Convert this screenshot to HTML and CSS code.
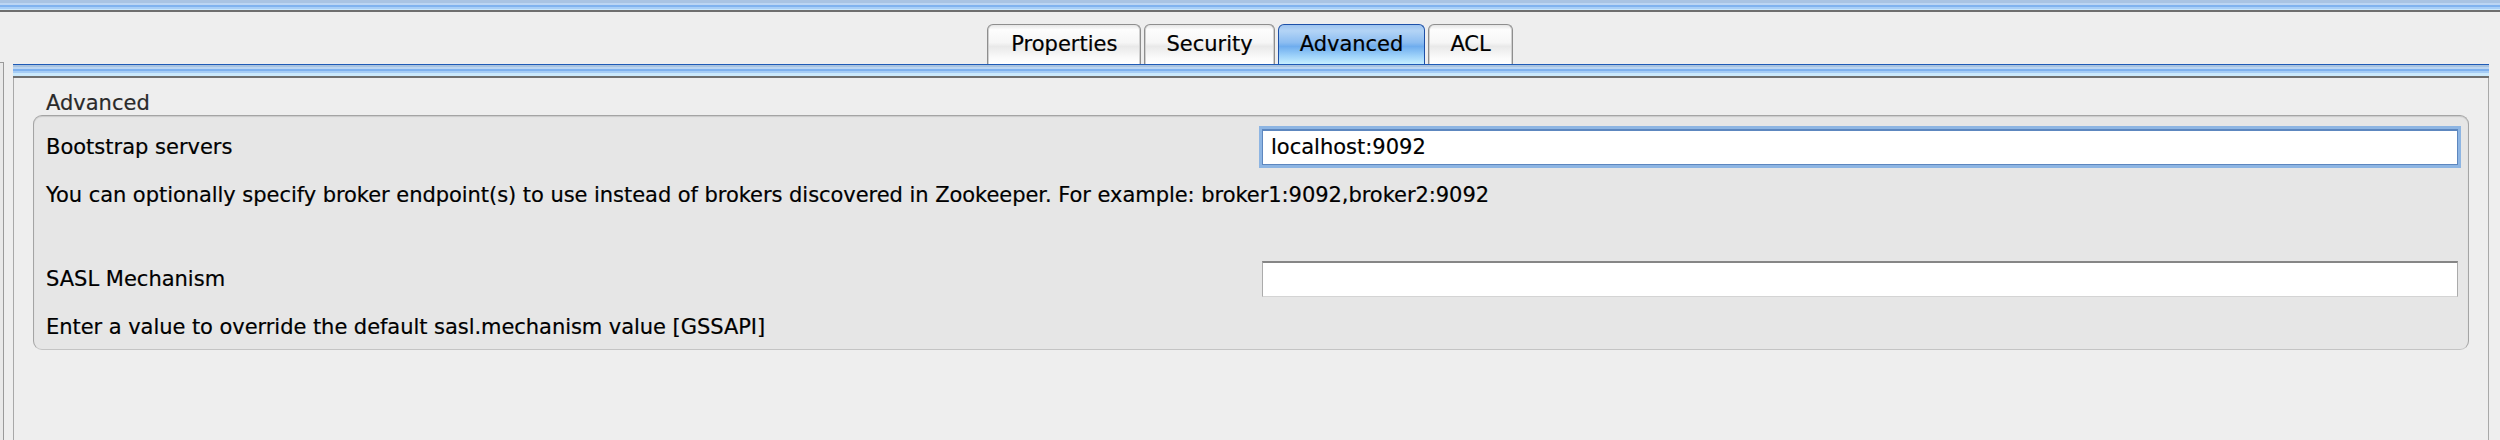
FILE: index.html
```html
<!DOCTYPE html>
<html>
<head>
<meta charset="utf-8">
<title>Advanced</title>
<link rel="stylesheet" href="styles.css">
</head>
<body>
<div class="topband"></div>
<div class="tabs">
  <div class="tab wide">Properties</div>
  <div class="tab">Security</div>
  <div class="tab sel">Advanced</div>
  <div class="tab">ACL</div>
</div>
<div class="main">
  <div class="stub"></div>
  <div class="panel">
    <div class="band"></div>
    <div class="content">
      <div class="gtitle">Advanced</div>
      <div class="group">
        <div class="prop">
          <div class="row">
            <span class="label">Bootstrap servers</span>
            <div class="field focus">localhost:9092</div>
          </div>
          <div class="desc">You can optionally specify broker endpoint(s) to use instead of brokers discovered in Zookeeper. For example: broker1:9092,broker2:9092</div>
        </div>
        <div class="prop">
          <div class="row">
            <span class="label">SASL Mechanism</span>
            <div class="field"></div>
          </div>
          <div class="desc">Enter a value to override the default sasl.mechanism value [GSSAPI]</div>
        </div>
      </div>
    </div>
  </div>
</div>
</body>
</html>
```
FILE: styles.css
```css
html, body {
  margin: 0;
  padding: 0;
}
body {
  width: 2500px;
  height: 440px;
  overflow: hidden;
  background: #eeeeee;
  font-family: "DejaVu Sans", "Liberation Sans", sans-serif;
  font-size: 21px;
  color: #000;
  -webkit-text-stroke: 0.2px currentColor;
}
.topband {
  height: 12px;
  background: linear-gradient(to bottom,
    #a9c4e3 0, #a9c4e3 3px,
    #bcd6f3 3px, #bcd6f3 5px,
    #80b3ef 5px, #80b3ef 7px,
    #a8cff7 7px, #a8cff7 9px,
    #cbe9fc 9px, #cbe9fc 10px,
    #6e6e6e 10px, #6e6e6e 12px);
}
.tabs {
  height: 52px;
  display: flex;
  justify-content: center;
  align-items: flex-end;
  gap: 3px;
}
.tab {
  height: 40px;
  box-sizing: border-box;
  padding: 0 21px;
  line-height: 38px;
  border: 1px solid #8e8e8e;
  border-bottom: none;
  border-radius: 6px 6px 0 0;
  background: linear-gradient(to bottom, #e6e6e6 0, #fdfdfd 12%, #f6f6f6 45%, #e9e9e9 55%, #fbfbfb 85%, #ffffff 100%);
  box-shadow: inset 1px 0 0 #d0d0d0, inset -1px 0 0 #d0d0d0;
  color: #000;
}
.tab.wide {
  padding: 0 23px;
}
.tab.sel {
  border-color: #1d50a8;
  background: linear-gradient(to bottom, #9ec4ef 0, #b3d4f6 15%, #8cbdf1 45%, #6fadee 55%, #9fd3fa 80%, #c6efff 100%);
  box-shadow: none;
}
.main {
  display: flex;
  align-items: flex-start;
}
.stub {
  width: 3px;
  height: 378px;
  margin-top: -2px;
  border-top: 1px solid #9a9a9a;
  border-right: 1px solid #9a9a9a;
  background: #e9e9e9;
}
.panel {
  flex: 1;
  margin-left: 9px;
  margin-right: 11px;
}
.band {
  height: 14px;
  background: linear-gradient(to bottom,
    #1f5bb6 0, #1f5bb6 1px,
    #a9c3df 1px, #a9c3df 3px,
    #bcd6f2 3px, #bcd6f2 5px,
    #7eb1ee 5px, #7eb1ee 7px,
    #a6cdf6 7px, #a6cdf6 9px,
    #cbe9fc 9px, #cbe9fc 12px,
    #6f6f6f 12px, #6f6f6f 14px);
}
.content {
  height: 362px;
  box-sizing: border-box;
  border-left: 1px solid #a8a8a8;
  border-right: 1px solid #a8a8a8;
  padding: 13px 19px 0 19px;
}
.gtitle {
  line-height: 24px;
  padding-left: 13px;
  color: #2a2a2a;
}
.group {
  border: 1px solid #a4a4a4;
  border-bottom-color: #c4c4c4;
  border-radius: 9px;
  background: #e6e6e6;
  box-shadow: inset 0 1px 1px rgba(0, 0, 0, 0.12);
  padding: 13px 10px 10px 12px;
}
.prop + .prop {
  margin-top: 54px;
}
.row {
  display: grid;
  grid-template-columns: 1fr 1196px;
  align-items: center;
  height: 36px;
}
.label {
  line-height: 36px;
}
.field {
  height: 36px;
  box-sizing: border-box;
  background: #fff;
  border: 1px solid #ababab;
  border-top: 2px solid #868686;
  border-bottom-color: #d4d4d4;
  padding-left: 8px;
  line-height: 33px;
  white-space: nowrap;
}
.field.focus {
  border-color: #5d87bf;
  border-top-width: 2px;
  box-shadow: 0 0 0 3px #8db5e3;
}
.desc {
  margin-top: 18px;
  line-height: 24px;
  letter-spacing: -0.05px;
}
```
